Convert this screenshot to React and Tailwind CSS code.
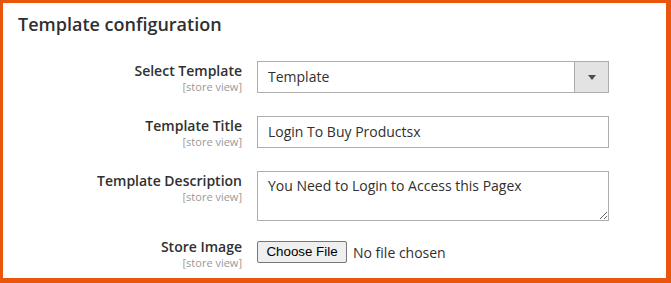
const Label = ({ children }) => (
  <div className="w-[239px] shrink-0 text-right">
    <div className="text-[14px] leading-[20px] font-semibold text-[#303030]">
      {children}
    </div>
    <div className="text-[11px] leading-[11px] text-[#999999]">[store view]</div>
  </div>
);

export default function App() {
  return (
    <div className="w-[671px] h-[283px] bg-white border-t-[3px] border-l-[3px] border-r-[5px] border-b-[5px] border-[#e9560b] font-['Open_Sans',sans-serif] text-[#303030] overflow-hidden">
      <h2 className="pl-[15px] pt-[9px] text-[18px] leading-[24px] font-semibold text-[#303030]">
        Template configuration
      </h2>

      <div className="mt-[25px] flex flex-col">
        {/* Select Template */}
        <div className="flex gap-[15px]">
          <Label>Select Template</Label>
          <div className="w-[352px] h-[32px] flex border border-[#adadad] bg-white">
            <div className="flex-1 pl-[10px] text-[14px] leading-[30px] text-[#303030]">
              Template
            </div>
            <div className="w-[34px] border-l border-[#adadad] bg-[#e3e3e3] flex items-center justify-center">
              <svg width="8" height="5" viewBox="0 0 8 5">
                <path d="M0 0H8L4 5Z" fill="#514943" />
              </svg>
            </div>
          </div>
        </div>

        {/* Template Title */}
        <div className="flex gap-[15px] mt-[23px]">
          <Label>Template Title</Label>
          <div className="w-[352px] h-[32px] border border-[#adadad] bg-white pl-[10px] text-[14px] leading-[30px] text-[#303030]">
            Login To Buy Productsx
          </div>
        </div>

        {/* Template Description */}
        <div className="flex gap-[15px] mt-[23px]">
          <Label>Template Description</Label>
          <textarea
            readOnly
            defaultValue="You Need to Login to Access this Pagex"
            className="w-[352px] h-[50px] border border-[#adadad] bg-white px-[10px] pt-[4px] text-[14px] leading-[20px] text-[#303030] outline-none resize"
          />
        </div>

        {/* Store Image */}
        <div className="flex gap-[15px] mt-[16px]">
          <Label>Store Image</Label>
          <div className="flex items-center h-[22px] mt-[4px]">
            <button className="h-[22px] w-[90px] border border-[#767676] rounded-[2px] bg-[#efefef] font-['Liberation_Sans',Arial,sans-serif] text-[13.33px] text-black">
              Choose File
            </button>
            <span className="ml-[6px] text-[14px] text-[#303030]">No file chosen</span>
          </div>
        </div>
      </div>
    </div>
  );
}
